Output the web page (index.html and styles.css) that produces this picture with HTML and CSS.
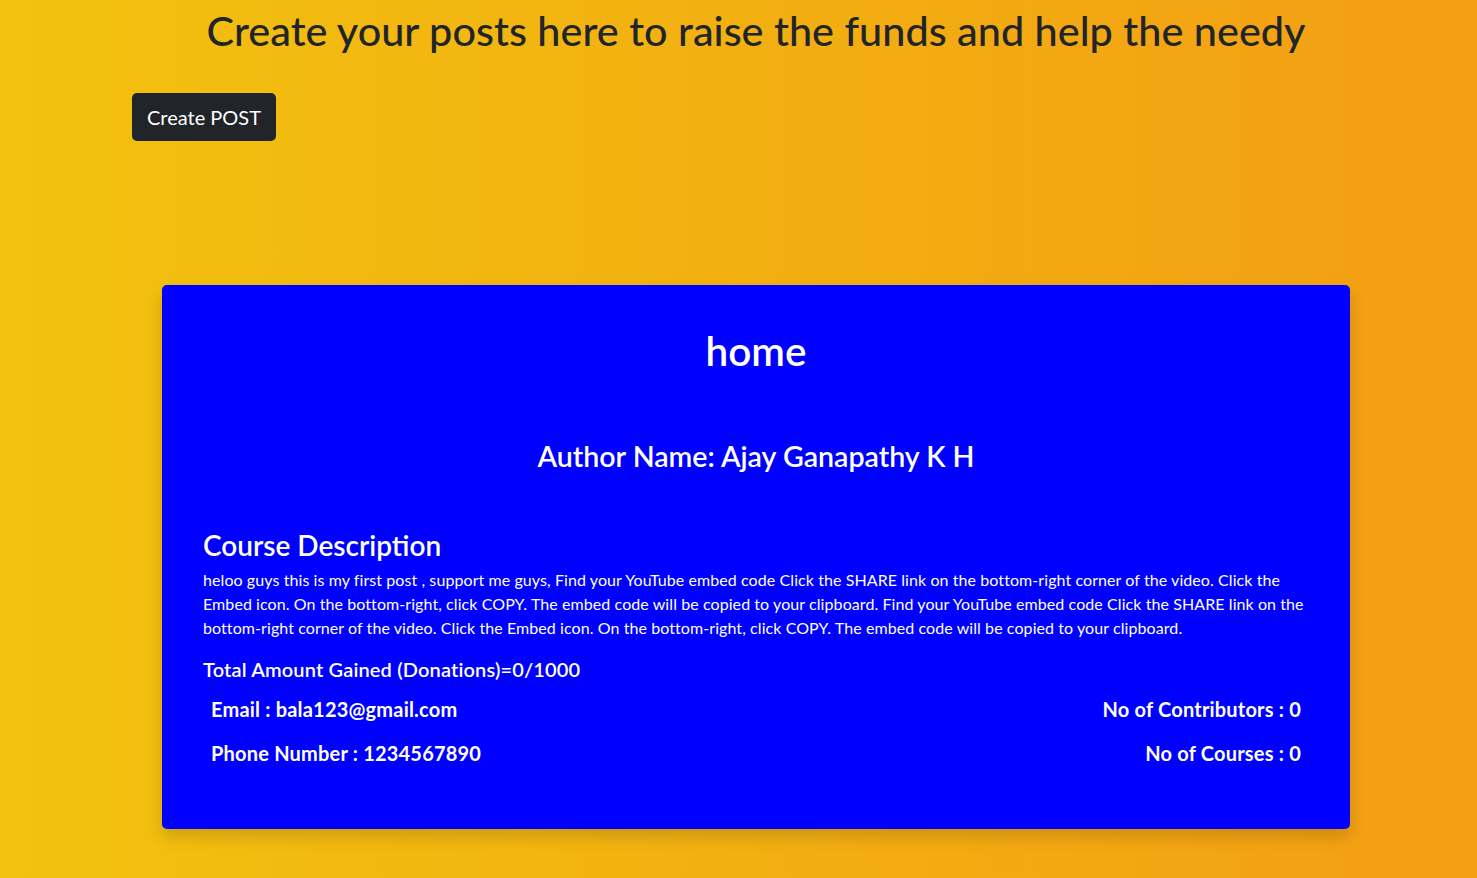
FILE: index.html
```html
<!DOCTYPE html>
<html lang="en">
<head>
<meta charset="utf-8">
<title>Posts</title>
<link rel="stylesheet" href="styles.css">
</head>
<body>
<div class="page">
  <h1 class="title">Create your posts here to raise the funds and help the needy</h1>
  <div class="actions">
    <button class="btn">Create POST</button>
  </div>
  <div class="card">
    <h1 class="card-title">home</h1>
    <h3 class="author">Author Name: Ajay Ganapathy K H</h3>
    <h3 class="section">Course Description</h3>
    <p class="desc">heloo guys this is my first post , support me guys, Find your YouTube embed code Click the SHARE link on the bottom-right corner of the video. Click the Embed icon. On the bottom-right, click COPY. The embed code will be copied to your clipboard. Find your YouTube embed code Click the SHARE link on the bottom-right corner of the video. Click the Embed icon. On the bottom-right, click COPY. The embed code will be copied to your clipboard.</p>
    <div class="total">Total Amount Gained (Donations)=0/1000</div>
    <div class="info">
      <div class="info-col">
        <div class="info-item">Email : bala123@gmail.com</div>
        <div class="info-item">Phone Number : 1234567890</div>
      </div>
      <div class="info-col right">
        <div class="info-item">No of Contributors : 0</div>
        <div class="info-item">No of Courses : 0</div>
      </div>
    </div>
  </div>
</div>
</body>
</html>
```
FILE: styles.css
```css
html, body {
  margin: 0;
  padding: 0;
}
body {
  min-height: 878px;
  background: linear-gradient(to right, #f2c20f, #f39e13);
  font-family: "Lato", "Noto Sans", sans-serif;
  color: #212529;
}
.page {
  padding: 6px 0 40px 35px;
  display: flex;
  flex-direction: column;
}
.title {
  margin: 0;
  font-size: 41.4px;
  font-weight: 500;
  line-height: 48px;
  text-align: center;
  color: #212529;
}
.actions {
  margin-top: 39px;
  padding-left: 97px;
}
.btn {
  background: #212529;
  color: #fff;
  border: none;
  border-radius: 5px;
  font-family: inherit;
  font-size: 20px;
  line-height: 30px;
  padding: 9px 15px;
  height: 48px;
}
.card {
  margin: 144px auto 0;
  width: 1188px;
  box-sizing: border-box;
  background: #0000ff;
  color: #fff;
  border-radius: 5px;
  padding: 42px 41px 64px;
  box-shadow: 0 8px 16px rgba(0,0,0,0.15);
}
.card-title {
  margin: 0;
  font-size: 40.5px;
  font-weight: 600;
  line-height: 48px;
  text-align: center;
}
.author {
  margin: 64px 0 0;
  font-size: 28.6px;
  font-weight: 600;
  line-height: 34px;
  text-align: center;
}
.section {
  margin: 55px 0 0;
  font-size: 28px;
  font-weight: 600;
  line-height: 34px;
}
.desc {
  margin: 6px 0 0;
  font-size: 16px;
  line-height: 24px;
  letter-spacing: 0.08px;
}
.total {
  margin-top: 17px;
  font-size: 20px;
  font-weight: 600;
  line-height: 24px;
  letter-spacing: 0.15px;
}
.info {
  display: flex;
  justify-content: space-between;
  padding: 0 8px;
  margin-top: 16px;
}
.info-col {
  display: flex;
  flex-direction: column;
  gap: 20px;
}
.info-col.right {
  align-items: flex-end;
}
.info-item {
  font-size: 20px;
  font-weight: 700;
  line-height: 24px;
  letter-spacing: 0.2px;
}
```
